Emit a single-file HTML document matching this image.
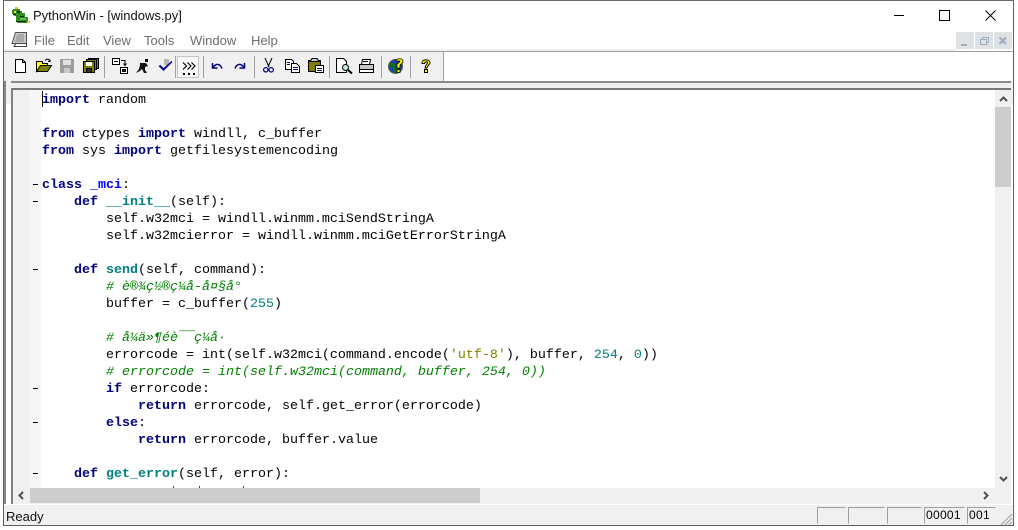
<!DOCTYPE html>
<html><head><meta charset="utf-8"><style>
html,body{margin:0;padding:0;width:1018px;height:530px;overflow:hidden;background:#fff}
.a{position:absolute}
.ui{font-family:"Liberation Sans",sans-serif;font-size:13px;color:#000;white-space:pre}
.m{color:#6d6d6d;top:33px;font-size:13px}
#code div{position:absolute;height:17px;line-height:17px;white-space:pre;font-family:"Liberation Mono",monospace;font-size:13.33px;color:#000}
b.k{color:#000080}b.f{color:#008080}b.c{color:#0000ff}
i{color:#008000}u{color:#008080;text-decoration:none}s{color:#808000;text-decoration:none}
svg{position:absolute;overflow:visible}
.sep{position:absolute;top:56px;width:1px;height:22px;background:#a0a0a0}
.p{position:absolute;top:507px;height:17px;box-sizing:border-box;border:1px solid #a0a0a0;border-right-color:#f0f0f0;border-bottom-color:#f0f0f0;font:12px/15px "Liberation Sans",sans-serif;padding-left:1px;letter-spacing:.3px}
</style></head><body>
<div class="a" style="left:0;top:0;width:1018px;height:530px;overflow:hidden;background:#fff">
<!-- outer border -->
<div class="a" style="left:3px;top:0;width:1011px;height:526px;box-sizing:border-box;border:1px solid #5f5f5f;border-top:1px solid #6a6a6a;z-index:5"></div>
<!-- Title -->
<svg style="left:11px;top:6px" width="20" height="18" viewBox="0 0 20 18"><path d="M2 3h7v2h2v2h3v4h3v4h2v2H6v-2H5v-5H3V8H1V4h1z" fill="#2f8f22"/><path d="M4 1h3v2H4zM16 15h3v2h-3z" fill="#e5c21b"/><path d="M6 5h3v2H6zM9 10h4v1H9zM5 15h10v1H5zM2 8h3v1H2z" fill="#0e2a0a"/><path d="M3 5h2v2H3z" fill="#f2d24a"/><path d="M9 12h6v2H9z" fill="#5fbf40"/></svg>
<div class="a ui" style="left:33px;top:8px;font-size:13px;color:#111">PythonWin - [windows.py]</div>
<div class="a" style="left:894px;top:15px;width:10px;height:1px;background:#000"></div>
<div class="a" style="left:939px;top:10px;width:9px;height:9px;border:1px solid #000"></div>
<svg style="left:985px;top:10px" width="11" height="11"><path d="M.5 .5L10.5 10.5M10.5 .5L.5 10.5" stroke="#000" stroke-width="1" fill="none"/></svg>
<!-- Menu -->
<svg style="left:11px;top:32px" width="17" height="16" viewBox="0 0 17 16"><path d="M4.500 .5h11v11H1z" fill="#c8c8c8" stroke="#555" stroke-width="1"/><path d="M5 11.500h10.500v3H3z" fill="#fff" stroke="#444" stroke-width="1"/><path d="M6 3h7M5 5h8M5 7h8M4 9h9" stroke="#8a8a8a" stroke-width="1"/></svg>
<div class="a ui m" style="left:34px">File</div>
<div class="a ui m" style="left:67px">Edit</div>
<div class="a ui m" style="left:103px">View</div>
<div class="a ui m" style="left:144px">Tools</div>
<div class="a ui m" style="left:190px">Window</div>
<div class="a ui m" style="left:251px">Help</div>
<div class="a" style="left:956px;top:32px;width:18px;height:17px;background:#dfe2e5"></div>
<div class="a" style="left:975px;top:32px;width:18px;height:17px;background:#dfe2e5"></div>
<div class="a" style="left:994px;top:32px;width:18px;height:17px;background:#dfe2e5"></div>
<div class="a" style="left:961px;top:44px;width:6px;height:2px;background:#9fb0c2"></div>
<svg style="left:980px;top:37px" width="9" height="9"><path d="M2.500 2V.5h6v5H7M.5 2.500h6v5h-6zM.5 2.500h6" stroke="#9aabbc" fill="none"/></svg>
<svg style="left:999px;top:37px" width="8" height="8"><path d="M.5 .5L7 7M7 .5L.5 7" stroke="#9aabbc" stroke-width="2" fill="none"/></svg>
<!-- Toolbar -->
<div class="a" style="left:4px;top:51px;width:1009px;height:1px;background:#a0a0a0"></div>
<div class="a" style="left:4px;top:49px;width:952px;height:2px;background:#f0f0f0"></div>
<div class="a" style="left:4px;top:52px;width:440px;height:29px;background:#f0f0f0"></div>
<div class="a" style="left:443px;top:52px;width:1px;height:29px;background:#a0a0a0"></div>
<div class="a" style="left:4px;top:81px;width:1009px;height:23px;background:#f0f0f0"></div>
<div class="a" style="left:11px;top:81px;width:1000px;height:2px;background:#8a8a8a"></div>
<div class="a" style="left:11px;top:88px;width:1000px;height:2px;background:#777"></div>
<div class="sep" style="left:104px"></div><div class="sep" style="left:175px"></div><div class="sep" style="left:203px"></div>
<div class="sep" style="left:254px"></div><div class="sep" style="left:329px"></div><div class="sep" style="left:381px"></div><div class="sep" style="left:410px"></div>
<div class="a" style="left:177px;top:56px;width:22px;height:22px;box-sizing:border-box;border:1px solid #c4c4c4;background:#fafafa"></div>
<!-- new -->
<svg style="left:15px;top:59px" width="12" height="15"><path d="M.5 .5h7l3 3v10H.5zM7.500 .5v3h3" fill="#fff" stroke="#000"/></svg>
<!-- open -->
<svg style="left:36px;top:58px" width="16" height="15"><path d="M.5 3.500h6v2h5v2h-6l-5 6z" fill="#ffff00" stroke="#000"/><path d="M.5 13.500l4-6h11l-4 6z" fill="#808000" stroke="#000"/><path d="M9 2.500c2-2 4-2 5 1M14 1.500v2h-2" stroke="#000" fill="none"/></svg>
<!-- save -->
<svg style="left:60px;top:59px" width="14" height="14"><path d="M0 0h14v14H0z" fill="#9e9e9e"/><path d="M3 1h8v5H3z" fill="#e0e0e0"/><path d="M4 9h6v5H4z" fill="#c8c8c8"/></svg>
<!-- save all -->
<svg style="left:83px;top:58px" width="16" height="15"><path d="M5.500 .5h10v10h-10z" fill="#808000" stroke="#000"/><path d="M3.500 1.500h10v10h-10z" fill="#808000" stroke="#000"/><path d="M.5 3.500h11v11H.5z" fill="#808000" stroke="#000"/><path d="M3 4h6v4H3z" fill="#fff"/><path d="M3.500 10.500h5v4h-5z" fill="#333" stroke="#000"/></svg>
<!-- edit buttons -->
<svg style="left:112px;top:58px" width="17" height="16"><path d="M.5 .5h7v6h-7zM8.500 9.500h7v6h-7z" fill="#fff" stroke="#000"/><path d="M2 3.500h4M10 12.500h4M10 11.500h4M10 13.500h4" stroke="#000"/><path d="M9 2.500h4v4M11.500 5.500l1.500 2 1.500-2" stroke="#000" fill="none"/></svg>
<svg style="left:134px;top:58px" width="16" height="16"><path d="M11 1h3v3h-3zM6 5h6l2 3-3 1 0 3 2 3h-3l-2-4-2 2-4 2 3-4 1-4z" fill="#111"/></svg>
<svg style="left:158px;top:58px" width="16" height="15"><path d="M6 1h5v6H6z" fill="#b8b8b8"/><path d="M.5 8l2-1 3 3 8-7 1 1-9 9z" fill="#000080"/></svg>
<svg style="left:182px;top:62px" width="14" height="14"><path d="M1 .5l3.500 3.500L1 7.500M5.500 .5L9 4 5.500 7.500M9.500 .5L13 4 9.500 7.500" stroke="#000" stroke-width="1.200" fill="none"/><path d="M1 11h2v2H1zM6 11h2v2H6zM11 11h2v2h-2z" fill="#000"/></svg>
<!-- undo/redo -->
<svg style="left:211px;top:62px" width="12" height="9"><path d="M1.500 1v5h5M2 5.500C5 1 9 1.500 11 6.500" stroke="#000080" stroke-width="1.500" fill="none"/></svg>
<svg style="left:234px;top:62px" width="12" height="9"><path d="M10.500 1v5h-5M10 5.500C7 1 3 1.500 1 6.500" stroke="#000080" stroke-width="1.500" fill="none"/></svg>
<!-- cut -->
<svg style="left:263px;top:58px" width="11" height="15"><path d="M2 0l4 9M9 0L5 9" stroke="#000" fill="none"/><circle cx="2.800" cy="11.800" r="2.200" fill="none" stroke="#000080" stroke-width="1.200"/><circle cx="8.200" cy="11.800" r="2.200" fill="none" stroke="#000080" stroke-width="1.200"/></svg>
<!-- copy -->
<svg style="left:285px;top:59px" width="15" height="14"><path d="M.5 .5h6l2 2v8H.5z" fill="#fff" stroke="#000"/><path d="M6.500 4.500h5l3 3v6h-8z" fill="#fff" stroke="#000"/><path d="M8 8.500h5M8 10.500h5M2 3.500h3M2 5.500h3" stroke="#000080"/></svg>
<!-- paste -->
<svg style="left:308px;top:58px" width="16" height="15"><path d="M.5 2.500h12v11H.5z" fill="#808000" stroke="#000"/><path d="M4 .5h5l2 3H2z" fill="#c8c8c8" stroke="#000"/><path d="M7.500 7.500h8v7h-8z" fill="#fff" stroke="#000"/><path d="M9 10.500h5M9 12.500h5" stroke="#000080"/></svg>
<!-- preview -->
<svg style="left:336px;top:58px" width="17" height="16"><path d="M.5 .5h7l3 3v11H.5z" fill="#fff" stroke="#000"/><circle cx="9.500" cy="9.500" r="3" fill="#bfe8e8" stroke="#000"/><path d="M12 12l4 3.500" stroke="#000" stroke-width="2"/></svg>
<!-- print -->
<svg style="left:359px;top:59px" width="16" height="14"><path d="M3.500 .5h8l-1 5h-8z" fill="#fff" stroke="#000"/><path d="M.5 5.500h14v5H.5z" fill="#c4c4c4" stroke="#000"/><path d="M.5 10.500h14v3H.5z" fill="#fff" stroke="#000"/><path d="M4 2.500h5" stroke="#000"/></svg>
<!-- help globe -->
<svg style="left:388px;top:58px" width="16" height="16"><circle cx="7.500" cy="8.500" r="7" fill="#1c3fb8" stroke="#555"/><path d="M2 5h5v4h2v6H5V9H2z" fill="#127012"/><path d="M8 3c0-3 7-3 7 0 0 2-2 3-3 4v3H9V6c1-1 3-2 3-3H8z" fill="#ffff00" stroke="#000" stroke-width=".8"/><path d="M9 11.500h3v3H9z" fill="#ffff00" stroke="#000" stroke-width=".8"/></svg>
<!-- help ? -->
<svg style="left:421px;top:59px" width="10" height="14"><path d="M1 3.500C1 0 9 0 9 3.500 9 6 6 6.500 6 9H4C4 6 6.500 5.500 6.500 3.500 6 2.500 4 2.500 3.500 4.500H1z" fill="#ffff00" stroke="#000"/><path d="M3.500 10.500h3v3h-3z" fill="#ffff00" stroke="#000"/></svg>

<!-- Editor frame -->
<div class="a" style="left:4px;top:81px;width:2px;height:423px;background:#8a8a8a"></div>
<div class="a" style="left:11px;top:89px;width:2px;height:415px;background:#808080"></div>
<div class="a" style="left:13px;top:90px;width:982px;height:398px;background:#fff"></div>
<div class="a" style="left:13px;top:90px;width:16px;height:398px;background:#f0f0f0"></div>
<div class="a" style="left:29px;top:90px;width:12px;height:398px;background:#f7f7f7"></div>
<div class="a" style="left:42px;top:91px;width:1px;height:16px;background:#000"></div>
<!-- fold marks -->
<div class="a" style="left:33px;top:184px;width:5px;height:1px;background:#000"></div>
<div class="a" style="left:33px;top:201px;width:5px;height:1px;background:#000"></div>
<div class="a" style="left:33px;top:269px;width:5px;height:1px;background:#000"></div>
<div class="a" style="left:33px;top:388px;width:5px;height:1px;background:#000"></div>
<div class="a" style="left:33px;top:422px;width:5px;height:1px;background:#000"></div>
<div class="a" style="left:33px;top:473px;width:5px;height:1px;background:#000"></div>

<div id="code" class="a" style="left:0;top:0;width:995px;height:488px;overflow:hidden">
<div style="left:42px;top:92px"><b class="k">import</b> random</div>
<div style="left:42px;top:126px"><b class="k">from</b> ctypes <b class="k">import</b> windll, c_buffer</div>
<div style="left:42px;top:143px"><b class="k">from</b> sys <b class="k">import</b> getfilesystemencoding</div>
<div style="left:42px;top:177px"><b class="k">class</b> <b class="c">_mci</b>:</div>
<div style="left:42px;top:194px">    <b class="k">def</b> <b class="f">__init__</b>(self):</div>
<div style="left:42px;top:211px">        self.w32mci = windll.winmm.mciSendStringA</div>
<div style="left:42px;top:228px">        self.w32mcierror = windll.winmm.mciGetErrorStringA</div>
<div style="left:42px;top:262px">    <b class="k">def</b> <b class="f">send</b>(self, command):</div>
<div style="left:42px;top:279px">        <i># è®¾ç½®ç¼å-å¤§å°</i></div>
<div style="left:42px;top:296px">        buffer = c_buffer(<u>255</u>)</div>
<div style="left:42px;top:330px">        <i># å¼ä»¶éè¯¯ç¼å·</i></div>
<div style="left:42px;top:347px">        errorcode = int(self.w32mci(command.encode(<s>'utf-8'</s>), buffer, <u>254</u>, <u>0</u>))</div>
<div style="left:42px;top:364px">        <i># errorcode = int(self.w32mci(command, buffer, 254, 0))</i></div>
<div style="left:42px;top:381px">        <b class="k">if</b> errorcode:</div>
<div style="left:42px;top:398px">            <b class="k">return</b> errorcode, self.get_error(errorcode)</div>
<div style="left:42px;top:415px">        <b class="k">else</b>:</div>
<div style="left:42px;top:432px">            <b class="k">return</b> errorcode, buffer.value</div>
<div style="left:42px;top:466px">    <b class="k">def</b> <b class="f">get_error</b>(self, error):</div>
</div>
<div class="a" style="left:173px;top:486px;width:1px;height:2px;background:#444"></div>
<div class="a" style="left:199px;top:486px;width:1px;height:2px;background:#444"></div>
<div class="a" style="left:243px;top:486px;width:1px;height:2px;background:#444"></div>

<!-- V scrollbar -->
<div class="a" style="left:995px;top:90px;width:16px;height:398px;background:#f0f0f0"></div>
<div class="a" style="left:995px;top:107px;width:16px;height:80px;background:#cdcdcd"></div>
<svg style="left:999px;top:96px" width="9" height="6"><path d="M1 5l3.500-3.500L8 5" stroke="#505050" stroke-width="2" fill="none"/></svg>
<svg style="left:999px;top:476px" width="9" height="6"><path d="M1 1l3.500 3.500L8 1" stroke="#505050" stroke-width="2" fill="none"/></svg>
<!-- H scrollbar -->
<div class="a" style="left:13px;top:488px;width:998px;height:16px;background:#f0f0f0"></div>
<div class="a" style="left:30px;top:488px;width:450px;height:15px;background:#cdcdcd"></div>
<svg style="left:18px;top:491px" width="6" height="9"><path d="M5 1L1.500 4.500 5 8" stroke="#505050" stroke-width="2" fill="none"/></svg>
<svg style="left:983px;top:491px" width="6" height="9"><path d="M1 1l3.500 3.500L1 8" stroke="#505050" stroke-width="2" fill="none"/></svg>
<!-- Status -->
<div class="a" style="left:4px;top:504px;width:1009px;height:21px;background:#f0f0f0"></div>
<div class="a" style="left:4px;top:504px;width:1009px;height:1px;background:#fff"></div>
<div class="a ui" style="left:6px;top:509px;font-size:13px;color:#111">Ready</div>
<div class="p" style="left:817px;width:29px"></div>
<div class="p" style="left:848px;width:37px"></div>
<div class="p" style="left:887px;width:35px"></div>
<div class="p" style="left:924px;width:41px">00001</div>
<div class="p" style="left:967px;width:29px">001</div>
<svg style="left:1000px;top:513px" width="12" height="12"><path d="M1 12L12 1M5 12l7-7M9 12l3-3" stroke="#a0a0a0" fill="none"/></svg>
</div>
</body></html>
